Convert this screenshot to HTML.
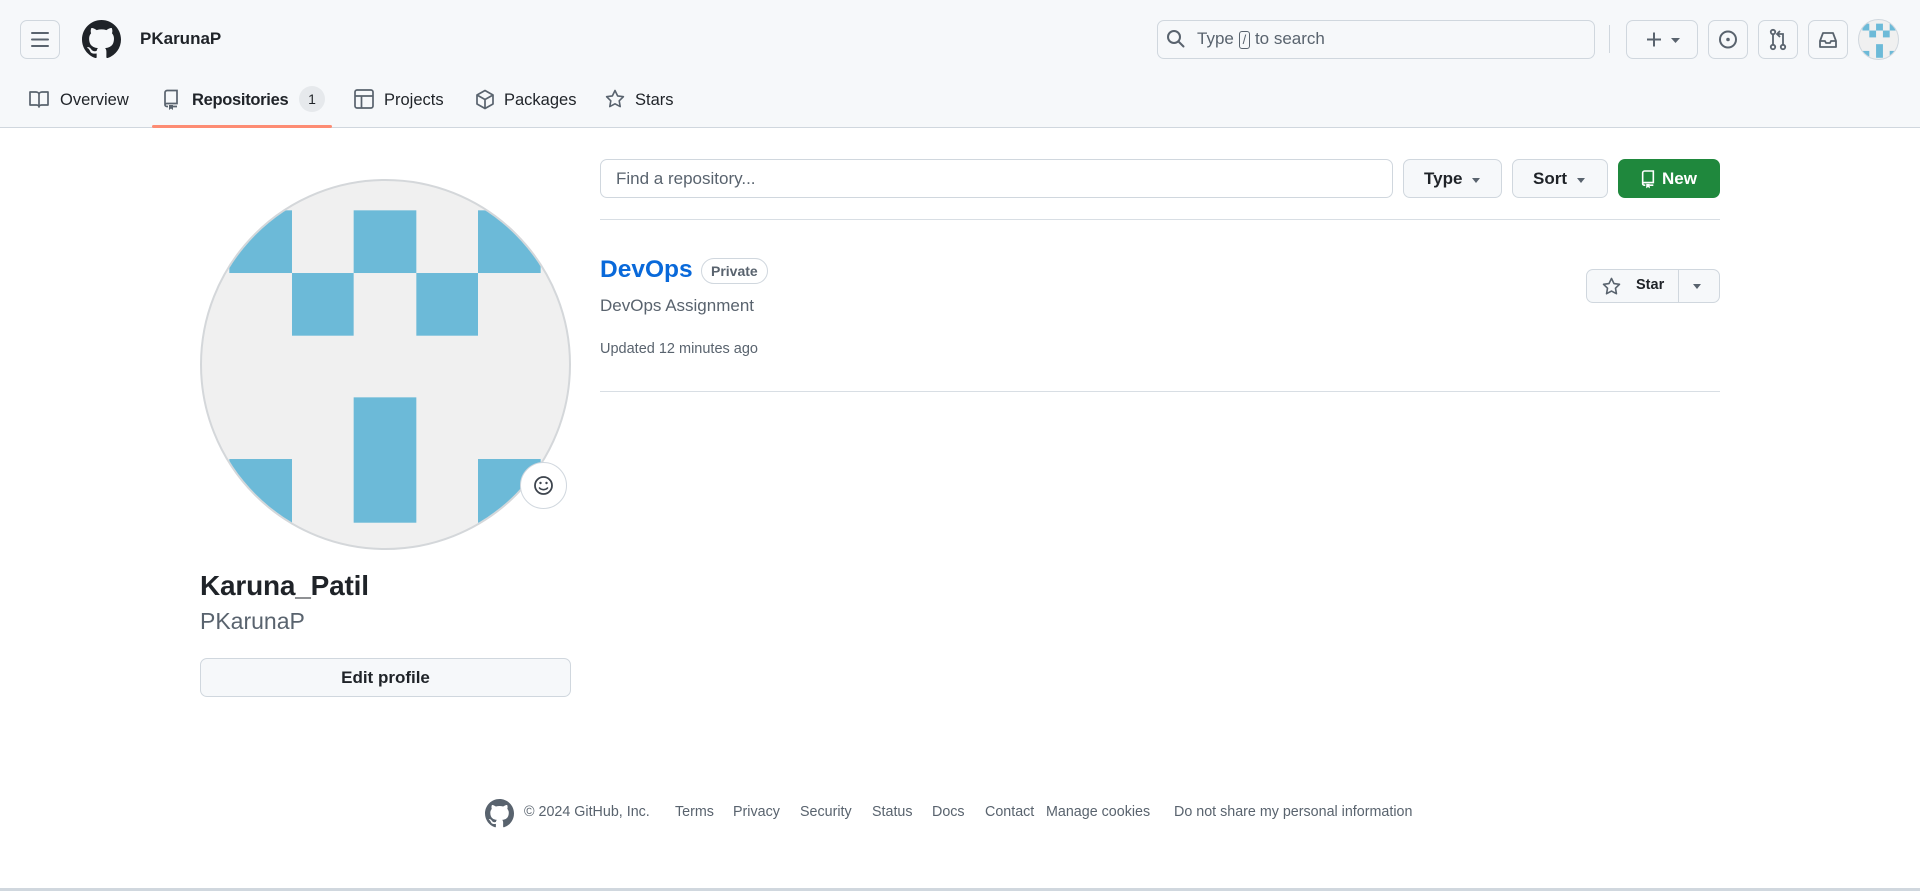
<!DOCTYPE html>
<html><head><meta charset="utf-8"><style>
*{box-sizing:border-box;margin:0;padding:0}
body{width:1920px;height:891px;overflow:hidden;background:#fff;font-family:"Liberation Sans",sans-serif;color:#1f2328;position:relative}
.a{position:absolute}
.hdr{left:0;top:0;width:1920px;height:128px;background:#f6f8fa;border-bottom:1px solid #d0d7de}
.btn{position:absolute;border:1px solid #d0d7de;border-radius:7px;background:#f6f8fa}
.t{position:absolute;font-size:16.5px;color:#1f2328;top:90px;line-height:20px}
svg{display:block}
.ft{position:absolute;top:804px;font-size:14.3px;color:#59636e}
</style></head><body>
<div class="a hdr"></div>
<div class="btn" style="left:20px;top:20px;width:40px;height:39px;background:#f6f8fa"><svg width="38" height="37" viewBox="0 0 38 37"><path d="M11 12h16M11 18.5h16M11 25h16" stroke="#59636e" stroke-width="2" stroke-linecap="round"/></svg></div>
<svg class="a" style="left:82px;top:20px" width="39" height="39" viewBox="0 0 16 16"><path fill="#1f2328" d="M8 0C3.58 0 0 3.58 0 8c0 3.54 2.290 6.53 5.47 7.59.4.07.55-.17.55-.38 0-.19-.01-.82-.01-1.49-2.01.37-2.53-.49-2.69-.94-.09-.23-.48-.94-.82-1.13-.28-.15-.68-.52-.01-.53.63-.01 1.08.58 1.23.82.72 1.21 1.87.87 2.33.66.07-.52.28-.87.51-1.07-1.78-.2-3.64-.89-3.64-3.95 0-.87.31-1.59.82-2.15-.08-.2-.36-1.02.08-2.12 0 0 .67-.21 2.2.82.64-.18 1.32-.27 2-.27.68 0 1.36.09 2 .27 1.53-1.04 2.2-.82 2.2-.82.44 1.1.16 1.92.08 2.12.51.56.82 1.27.82 2.15 0 3.07-1.87 3.75-3.65 3.95.29.25.54.73.54 1.48 0 1.07-.01 1.93-.01 2.2 0 .21.15.46.55.38A8.013 8.013 0 0016 8c0-4.42-3.58-8-8-8z"/></svg>
<div class="a" style="left:140px;top:29px;font-size:17px;font-weight:600">PKarunaP</div>
<div class="btn" style="left:1157px;top:20px;width:438px;height:39px;background:#f6f8fa"></div>
<svg class="a" style="left:1166px;top:29px" width="20" height="20" viewBox="0 0 20 20"><circle cx="8" cy="8" r="6" fill="none" stroke="#59636e" stroke-width="2"/><path d="M12.5 12.5l5 5" stroke="#59636e" stroke-width="2" stroke-linecap="round"/></svg>
<div class="a" style="left:1197px;top:29px;font-size:17px;color:#59636e">Type <span style="display:inline-block;border:1px solid #59636e;border-radius:3px;font-size:13px;padding:0 3px;line-height:16px">/</span> to search</div>
<div class="a" style="left:1609px;top:25px;width:1px;height:28px;background:#d0d7de"></div>
<div class="btn" style="left:1626px;top:20px;width:72px;height:39px"><svg width="70" height="37"><path d="M20 18.5h14M27 11.5v14" stroke="#59636e" stroke-width="2"/><path d="M44 17h9l-4.5 5z" fill="#59636e"/></svg></div>
<div class="btn" style="left:1708px;top:20px;width:40px;height:39px"><svg width="38" height="37"><circle cx="19" cy="18.5" r="8" fill="none" stroke="#59636e" stroke-width="2"/><circle cx="19" cy="18.5" r="1.8" fill="#59636e"/></svg></div>
<div class="btn" style="left:1758px;top:20px;width:40px;height:39px"><svg width="38" height="37"><circle cx="14" cy="11" r="2.2" fill="none" stroke="#59636e" stroke-width="1.8"/><circle cx="14" cy="26" r="2.2" fill="none" stroke="#59636e" stroke-width="1.8"/><circle cx="24" cy="26" r="2.2" fill="none" stroke="#59636e" stroke-width="1.8"/><path d="M14 13v11M24 24v-11h-5M21 10l-3 3 3 3" stroke="#59636e" stroke-width="1.8" fill="none"/></svg></div>
<div class="btn" style="left:1808px;top:20px;width:40px;height:39px"><svg width="38" height="37"><path d="M11 20l3-8h10l3 8v6H11z M11 20h5l1 2h4l1-2h5" fill="none" stroke="#59636e" stroke-width="1.8" stroke-linejoin="round"/></svg></div>
<div class="a" style="left:1858px;top:19px;width:41px;height:41px;border-radius:50%;background:#f0f0f0;border:1px solid #d0d7de;overflow:hidden">
<svg width="41" height="41" viewBox="0 0 370 370"><g fill="#6cbad8"><rect x="31" y="33" width="62" height="62"/><rect x="154" y="33" width="62" height="62"/><rect x="277" y="33" width="62" height="62"/><rect x="93" y="95" width="61" height="62"/><rect x="216" y="95" width="61" height="62"/><rect x="154" y="218" width="62" height="123"/><rect x="31" y="279" width="62" height="62"/><rect x="277" y="279" width="62" height="62"/></g></svg></div>
<!-- tabs -->
<svg class="a" style="left:29px;top:90px" width="20" height="18" viewBox="0 0 20 18"><path d="M1 2h6c1.5 0 3 1 3 2.5V17c0-1-1-2-2.5-2H1zM19 2h-6c-1.5 0-3 1-3 2.5V17c0-1 1-2 2.5-2H19z" fill="none" stroke="#59636e" stroke-width="1.7" stroke-linejoin="round"/></svg>
<div class="t" style="left:60px">Overview</div>
<svg class="a" style="left:162px;top:89px" width="18" height="21" viewBox="0 0 18 21"><path d="M3 16V3.5C3 2.5 4 1.5 5 1.5h10v13H5c-1.2 0-2 .8-2 1.5s.8 1.5 2 1.5h1M11 17.5h4" fill="none" stroke="#59636e" stroke-width="1.7"/><path d="M7 16h4v5l-2-1.5L7 21z" fill="#59636e"/></svg>
<div class="t" style="left:192px;font-weight:600;letter-spacing:-0.3px">Repositories</div>
<div class="a" style="left:299px;top:86px;width:26px;height:26px;border-radius:13px;background:#e6e9ec;font-size:14px;text-align:center;line-height:26px">1</div>
<div class="a" style="left:152px;top:125px;width:180px;height:3px;background:#fd8c73;border-radius:2px"></div>
<svg class="a" style="left:354px;top:89px" width="20" height="20" viewBox="0 0 20 20"><rect x="1" y="1" width="18" height="18" rx="2" fill="none" stroke="#59636e" stroke-width="1.7"/><path d="M1 7h18M7.5 7v12" stroke="#59636e" stroke-width="1.7"/></svg>
<div class="t" style="left:384px">Projects</div>
<svg class="a" style="left:475px;top:89px" width="20" height="21" viewBox="0 0 20 21"><path d="M10 1.5l8 4.5v9l-8 4.5-8-4.5V6zM2 6l8 4.5L18 6M10 10.5v9" fill="none" stroke="#59636e" stroke-width="1.7" stroke-linejoin="round"/></svg>
<div class="t" style="left:504px">Packages</div>
<svg class="a" style="left:605px;top:89px" width="20" height="20" viewBox="0 0 20 20"><path d="M10 1.5l2.6 5.4 5.8.8-4.2 4.1 1 5.8L10 14.8l-5.2 2.8 1-5.8L1.6 7.7l5.8-.8z" fill="none" stroke="#59636e" stroke-width="1.6" stroke-linejoin="round"/></svg>
<div class="t" style="left:635px">Stars</div>
<!-- avatar -->
<div class="a" style="left:200px;top:179px;width:371px;height:371px;border-radius:50%;background:#f0f0f0;border:2px solid #d4d7da;overflow:hidden">
<svg width="371" height="371" viewBox="2 2 367 367" style="position:absolute;left:-2px;top:-2px"><g fill="#6cbad8"><rect x="31" y="33" width="62" height="62"/><rect x="154" y="33" width="62" height="62"/><rect x="277" y="33" width="62" height="62"/><rect x="93" y="95" width="61" height="62"/><rect x="216" y="95" width="61" height="62"/><rect x="154" y="218" width="62" height="124"/><rect x="31" y="279" width="62" height="63"/><rect x="277" y="279" width="62" height="63"/></g></svg></div>
<div class="a" style="left:520px;top:462px;width:47px;height:47px;border-radius:50%;background:#fff;border:1px solid #d0d7de"><svg width="45" height="45"><circle cx="22.5" cy="22.5" r="8.5" fill="none" stroke="#3d444d" stroke-width="1.8"/><circle cx="19.5" cy="20" r="1.2" fill="#3d444d"/><circle cx="25.5" cy="20" r="1.2" fill="#3d444d"/><path d="M18.5 25c2 2.2 6 2.2 8 0" fill="none" stroke="#3d444d" stroke-width="1.6" stroke-linecap="round"/></svg></div>
<div class="a" style="left:200px;top:570px;font-size:28px;font-weight:700;color:#1f2328;letter-spacing:-0.2px">Karuna_Patil</div>
<div class="a" style="left:200px;top:608px;font-size:23px;color:#59636e;font-weight:300">PKarunaP</div>
<div class="btn" style="left:200px;top:658px;width:371px;height:39px;text-align:center;line-height:37px;font-size:17px;font-weight:600">Edit profile</div>
<!-- repos -->
<div class="a" style="left:600px;top:159px;width:793px;height:39px;border:1px solid #d0d7de;border-radius:7px;font-size:17px;color:#59636e;padding-left:15px;line-height:37px">Find a repository...</div>
<div class="btn" style="left:1403px;top:159px;width:99px;height:39px;font-size:17px;font-weight:600;line-height:37px;padding-left:20px">Type <span style="display:inline-block;border:4.5px solid transparent;border-top:5px solid #59636e;vertical-align:middle;margin-left:5px;margin-top:5px"></span></div>
<div class="btn" style="left:1512px;top:159px;width:96px;height:39px;font-size:17px;font-weight:600;line-height:37px;padding-left:20px">Sort <span style="display:inline-block;border:4.5px solid transparent;border-top:5px solid #59636e;vertical-align:middle;margin-left:5px;margin-top:5px"></span></div>
<div class="a" style="left:1618px;top:159px;width:102px;height:39px;background:#1f883d;border-radius:7px;color:#fff;font-size:17px;font-weight:700;line-height:39px;padding-left:44px">New</div>
<svg class="a" style="left:1640px;top:169px" width="16" height="20" viewBox="0 0 18 21"><path d="M3 16V3.5C3 2.5 4 1.5 5 1.5h10v13H5c-1.2 0-2 .8-2 1.5s.8 1.5 2 1.5h1M11 17.5h4" fill="none" stroke="#fff" stroke-width="1.8"/><path d="M7 16h4v5l-2-1.5L7 21z" fill="#fff"/></svg>
<div class="a" style="left:600px;top:219px;width:1120px;height:1px;background:#d8dee4"></div>
<div class="a" style="left:600px;top:256px;font-size:24.5px;font-weight:600;color:#0969da">DevOps</div>
<div class="a" style="left:701px;top:258px;height:26px;border:1px solid #d0d7de;border-radius:13px;font-size:14px;color:#59636e;padding:0 9px;line-height:24px;font-weight:600">Private</div>
<div class="a" style="left:600px;top:296px;font-size:17px;color:#59636e">DevOps Assignment</div>
<div class="a" style="left:600px;top:341px;font-size:14.5px;color:#59636e">Updated 12 minutes ago</div>
<div class="btn" style="left:1586px;top:269px;width:134px;height:34px"></div>
<div class="a" style="left:1678px;top:270px;width:1px;height:32px;background:#d0d7de"></div>
<svg class="a" style="left:1602px;top:277px" width="19" height="19" viewBox="0 0 20 20"><path d="M10 1.5l2.6 5.4 5.8.8-4.2 4.1 1 5.8L10 14.8l-5.2 2.8 1-5.8L1.6 7.7l5.8-.8z" fill="none" stroke="#59636e" stroke-width="1.7" stroke-linejoin="round"/></svg>
<div class="a" style="left:1636px;top:277px;font-size:14.5px;font-weight:600">Star</div>
<div class="a" style="left:1693px;top:284px;border:4.5px solid transparent;border-top:5px solid #59636e"></div>
<div class="a" style="left:600px;top:391px;width:1120px;height:1px;background:#d8dee4"></div>
<!-- footer -->
<svg class="a" style="left:485px;top:799px" width="29" height="29" viewBox="0 0 16 16"><path fill="#59636e" d="M8 0C3.58 0 0 3.58 0 8c0 3.54 2.29 6.53 5.47 7.59.4.07.55-.17.55-.38 0-.19-.01-.82-.01-1.49-2.01.37-2.53-.49-2.69-.94-.09-.23-.48-.94-.82-1.13-.28-.15-.68-.52-.01-.53.63-.01 1.08.58 1.23.82.72 1.21 1.87.87 2.33.66.07-.52.28-.87.51-1.07-1.78-.2-3.64-.89-3.64-3.95 0-.87.31-1.59.82-2.15-.08-.2-.36-1.02.08-2.12 0 0 .67-.21 2.2.82.64-.18 1.32-.27 2-.27.68 0 1.36.09 2 .27 1.53-1.04 2.2-.82 2.2-.82.44 1.1.16 1.92.08 2.12.51.56.82 1.27.82 2.15 0 3.07-1.87 3.75-3.65 3.95.29.25.54.73.54 1.48 0 1.07-.01 1.93-.01 2.2 0 .21.15.46.55.38A8.013 8.013 0 0016 8c0-4.42-3.58-8-8-8z"/></svg>
<div class="ft" style="left:524px">© 2024 GitHub, Inc.</div>
<div class="ft" style="left:675px">Terms</div>
<div class="ft" style="left:733px">Privacy</div>
<div class="ft" style="left:800px">Security</div>
<div class="ft" style="left:872px">Status</div>
<div class="ft" style="left:932px">Docs</div>
<div class="ft" style="left:985px">Contact</div>
<div class="ft" style="left:1046px">Manage cookies</div>
<div class="ft" style="left:1174px">Do not share my personal information</div>
<div class="a" style="left:0;top:888px;width:1920px;height:3px;background:#d0d7de"></div>
</body></html>
